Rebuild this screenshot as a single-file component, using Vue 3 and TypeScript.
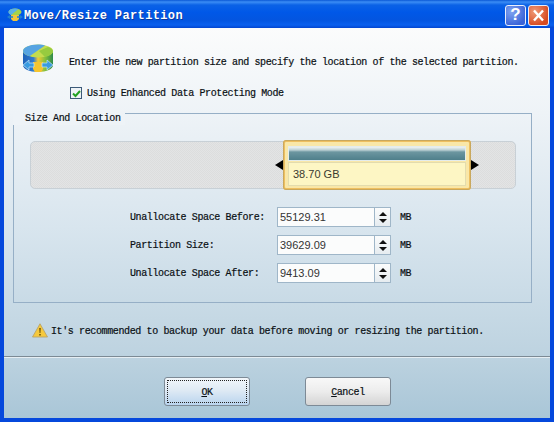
<script setup lang="ts">
type Field = { label: string; value: string };

const fields: Field[] = [
  { label: "Unallocate Space Before:", value: "55129.31" },
  { label: "Partition Size:", value: "39629.09" },
  { label: "Unallocate Space After:", value: "9413.09" },
];
</script>

<template>
  <div class="window">
    <header class="titlebar">
      <svg class="title-icon" width="16" height="16" viewBox="0 0 16 16">
        <ellipse cx="8" cy="5" rx="6.500" ry="3.500" fill="#a6d24a" />
        <path d="M1.500 5a6.500 3.500 0 0 1 10-3L4 8a6.500 3.500 0 0 1-2.500-3z" fill="#5ab0e8" />
        <path d="M4 8h8v4l-2 2H6l-2-2z" fill="#f2c53a" />
        <path d="M0 10l3-2v1.300h3v1.400H3V12zM16 10l-3-2v1.300h-3v1.400h3V12z" fill="#1f7fd0" />
      </svg>
      <span class="title-text">Move/Resize Partition</span>
      <div class="caption-btns">
        <span class="cap help">?</span>
        <span class="cap close">
          <svg width="21" height="21" viewBox="0 0 21 21"><path d="M6 5.500l9 10M15 5.500l-9 10" stroke="#fff" stroke-width="2.400" /></svg>
        </span>
      </div>
    </header>

    <main class="client">
      <div class="intro">
        <svg class="intro-icon" width="32" height="30" viewBox="0 0 32 30">
          <defs>
            <linearGradient id="side" x1="0" y1="0" x2="1" y2="0">
              <stop offset="0" stop-color="#1f62b8" />
              <stop offset="0.35" stop-color="#2f7bd0" />
              <stop offset="0.5" stop-color="#f5c930" />
              <stop offset="0.75" stop-color="#7fbf3f" />
              <stop offset="1" stop-color="#2f8a4a" />
            </linearGradient>
          </defs>
          <path d="M1 7v14c0 4 6 7 15 7s15-3 15-7V7z" fill="url(#side)" />
          <ellipse cx="16" cy="7" rx="15" ry="6.500" fill="#c4dc4e" />
          <path d="M1 7c0-3.500 6-6.500 15-6.500 3 0 5 .3 7 1L7.500 12.200C3.500 11 1 9.200 1 7z" fill="#56a4e2" />
          <path d="M31 7c0 2.500-3 5-8 6L17 7l9-4c3 1 5 2.500 5 4z" fill="#97cb3f" />
          <path d="M11 18h10v7l-2 3h-6l-2-3z" fill="#f6c52e" />
          <path d="M1 21l6-5v3h5v4H7v3zM31 21l-6-5v3h-5v4h5v3z" fill="#3a9be0" stroke="#c9e6f8" stroke-width=".7" />
        </svg>
        <p class="text intro-text">Enter the new partition size and specify the location of the selected partition.</p>
      </div>

      <label class="check-row">
        <span class="checkbox">
          <svg width="11" height="11" viewBox="0 0 11 11"><path d="M2 5.500l2.500 2.500L9 3" fill="none" stroke="#21a121" stroke-width="2" /></svg>
        </span>
        <span class="text">Using Enhanced Data Protecting Mode</span>
      </label>

      <section class="group">
        <span class="legend text">Size And Location</span>

        <div class="bar">
          <div class="slider">
            <i class="arrow left"></i>
            <div class="block">
              <div class="fill"></div>
              <div class="size">38.70 GB</div>
            </div>
            <i class="arrow right"></i>
          </div>
        </div>

        <div class="fields">
          <div v-for="f in fields" :key="f.label" class="field">
            <span class="text field-label">{{ f.label }}</span>
            <div class="input">{{ f.value }}</div>
            <div class="spin">
              <span class="up"></span>
              <span class="down"></span>
            </div>
            <span class="text unit">MB</span>
          </div>
        </div>
      </section>

      <div class="warning">
        <svg width="16" height="15" viewBox="0 0 16 15">
          <path d="M8 .8L15.500 14H.5z" fill="#f6c93c" stroke="#b9a46a" stroke-width=".9" stroke-linejoin="round" />
          <path d="M7.300 5h1.400l-.3 5h-.8zM7.300 11h1.400v1.400H7.300z" fill="#5a4300" />
        </svg>
        <p class="text warning-text">It's recommended to backup your data before moving or resizing the partition.</p>
      </div>

      <footer class="actions">
        <button class="btn ok"><span class="focus text"><u>O</u>K</span></button>
        <button class="btn cancel"><span class="text"><u>C</u>ancel</span></button>
      </footer>
    </main>
  </div>
</template>

<style scoped>
.window {
  width: 554px;
  height: 422px;
  box-sizing: border-box;
  display: flex;
  flex-direction: column;
  padding: 0 4px 4px;
  background: #0548dc;
  overflow: hidden;
}
.titlebar {
  height: 28px;
  box-sizing: border-box;
  margin: 0 -4px;
  padding: 2px 4px 0 7px;
  display: flex;
  align-items: center;
  flex-shrink: 0;
  background: linear-gradient(#0a58d6 0, #3b8df5 2px, #0b62e6 5px, #0058e8 12px, #0355e0 20px, #0a60ee 25px, #0346d0 28px);
}
.title-icon { margin-right: 1px; }
.title-text {
  padding-top: 1px;
  font: bold 12px "Liberation Mono", monospace;
  letter-spacing: 0.37px;
  color: #fff;
  text-shadow: 1px 1px 0 #0b3a9e;
}
.caption-btns {
  margin-left: auto;
  display: flex;
  gap: 2px;
  margin-right: 1px;
}
.cap {
  width: 21px;
  height: 21px;
  box-sizing: border-box;
  border: 1px solid #e8eefc;
  border-radius: 3px;
  display: flex;
  align-items: center;
  justify-content: center;
  overflow: hidden;
}
.help {
  background: radial-gradient(circle at 30% 30%, #7fa3f0, #3b64d8 75%);
  color: #fff;
  font: bold 17px "Liberation Sans", sans-serif;
}
.close { background: radial-gradient(circle at 30% 30%, #f09a78, #d64a20 75%); }
.close svg { margin: -1px; flex-shrink: 0; }
.client {
  flex: 1;
  display: flex;
  flex-direction: column;
  min-height: 0;
  background: linear-gradient(#fbfcfc 0, #eef3f7 85px, #d8e5ee 200px, #bfd4e1 320px, #a9c6d7 390px);
}
.text {
  margin: 0;
  font: 10px "Liberation Mono", monospace;
  letter-spacing: -0.38px;
  color: #0a1014;
  -webkit-text-stroke: 0.2px #0a1014;
  white-space: nowrap;
}
.intro {
  display: flex;
  align-items: center;
  height: 30px;
  margin-top: 16px;
  padding-left: 18px;
}
.intro-icon { margin-right: 15px; flex-shrink: 0; }
.intro-text { padding-top: 7px; }
.check-row {
  display: flex;
  align-items: center;
  height: 12px;
  margin-top: 13px;
  padding-left: 66px;
}
.checkbox {
  width: 12px;
  height: 12px;
  box-sizing: border-box;
  border: 1px solid #3c5a78;
  background: #eef3f6;
  margin-right: 5px;
  display: flex;
  align-items: center;
  justify-content: center;
}
.checkbox svg { flex-shrink: 0; }
.group {
  position: relative;
  margin: 14px 18px 0 9px;
  height: 190px;
  box-sizing: border-box;
  border: 1px solid #96afc6;
  padding: 27px 15px 0 16px;
}
.legend {
  position: absolute;
  top: -1px;
  left: -1px;
  width: 112px;
  height: 12px;
  box-sizing: border-box;
  padding-left: 12px;
  line-height: 12px;
  background: #eef3f7;
}
.bar {
  height: 48px;
  border: 1px solid #c8d0d6;
  border-radius: 5px;
  box-sizing: border-box;
  background-color: #e3e4e5;
  background-image: conic-gradient(#dcdddd 25%, transparent 0 50%, #dcdddd 0 75%, transparent 0);
  background-size: 2px 2px;
  display: flex;
  padding-left: 244px;
}
.slider {
  position: relative;
  display: flex;
  align-items: center;
  height: 50px;
  margin-top: -2px;
}
.block {
  width: 188px;
  height: 50px;
  box-sizing: border-box;
  border: 2px solid #eebf60;
  border-radius: 3px;
  background: #f9e7a8;
  outline: 1px solid #c9a85e;
  outline-offset: -1px;
  padding: 4px 3px 2px;
  display: flex;
  flex-direction: column;
}
.fill {
  height: 15px;
  box-sizing: border-box;
  border: 1px solid #e4ecec;
  background: linear-gradient(#eef3f3 0, #bcd0d4 3px, #6c96a0 5px, #4f7f8b 100%);
}
.size {
  flex: 1;
  margin-top: 1px;
  padding-left: 4px;
  display: flex;
  align-items: center;
  border: 1px solid #e3dcae;
  background: #fdf6c4;
  font: 11px "Liberation Sans", sans-serif;
  color: #3a3a30;
}
.arrow {
  width: 0;
  height: 0;
  border-top: 5px solid transparent;
  border-bottom: 5px solid transparent;
}
.arrow.left { border-right: 8px solid #000; }
.arrow.right { border-left: 8px solid #000; }
.fields {
  display: flex;
  flex-direction: column;
  gap: 8px;
  margin-top: 18px;
  padding-left: 100px;
}
.field {
  display: flex;
  align-items: center;
  height: 20px;
}
.field-label { width: 147px; flex-shrink: 0; padding-top: 1px; }
.input {
  width: 98px;
  height: 20px;
  box-sizing: border-box;
  border: 1px solid #9fb6c8;
  padding-left: 2px;
  background: #fbfcfc;
  font: 11px/18px "Liberation Sans", sans-serif;
  color: #333;
}
.spin {
  width: 16px;
  height: 20px;
  box-sizing: border-box;
  border: 1px solid #9fb6c8;
  border-left: 0;
  background: linear-gradient(#fbfcfc, #e6ecf0);
  display: flex;
  flex-direction: column;
  align-items: center;
  justify-content: center;
  gap: 3px;
}
.up, .down {
  width: 0;
  height: 0;
  border-left: 4px solid transparent;
  border-right: 4px solid transparent;
}
.up { border-bottom: 4px solid #111; }
.down { border-top: 4px solid #111; }
.unit { margin-left: 9px; padding-top: 1px; }
.warning {
  display: flex;
  align-items: center;
  height: 15px;
  margin-top: 20px;
  padding-left: 28px;
  gap: 3px;
}
.warning svg { flex-shrink: 0; }
.warning-text { padding-top: 1px; }
.actions {
  margin-top: 18px;
  flex: 1;
  border-top: 1px solid #7c8a94;
  box-shadow: inset 0 1px 0 #e6eef3;
  display: flex;
  gap: 55px;
  padding: 20px 0 0 160px;
}
.btn {
  width: 86px;
  height: 29px;
  box-sizing: border-box;
  padding: 2px 0 0;
  border: 1px solid #7d8a96;
  border-radius: 3px;
  display: flex;
  align-items: center;
  justify-content: center;
}
.ok {
  background: linear-gradient(#f2f7fb, #dfeaf4 45%, #b9d4ee);
  padding: 2px;
}
.focus {
  flex: 1;
  align-self: stretch;
  display: flex;
  align-items: center;
  justify-content: center;
  padding-top: 1px;
  border: 1px dotted #222;
}
.focus u { text-underline-offset: 1px; }
.cancel { background: linear-gradient(#f8f8f8, #ececec 50%, #d4d4d4); }
</style>
